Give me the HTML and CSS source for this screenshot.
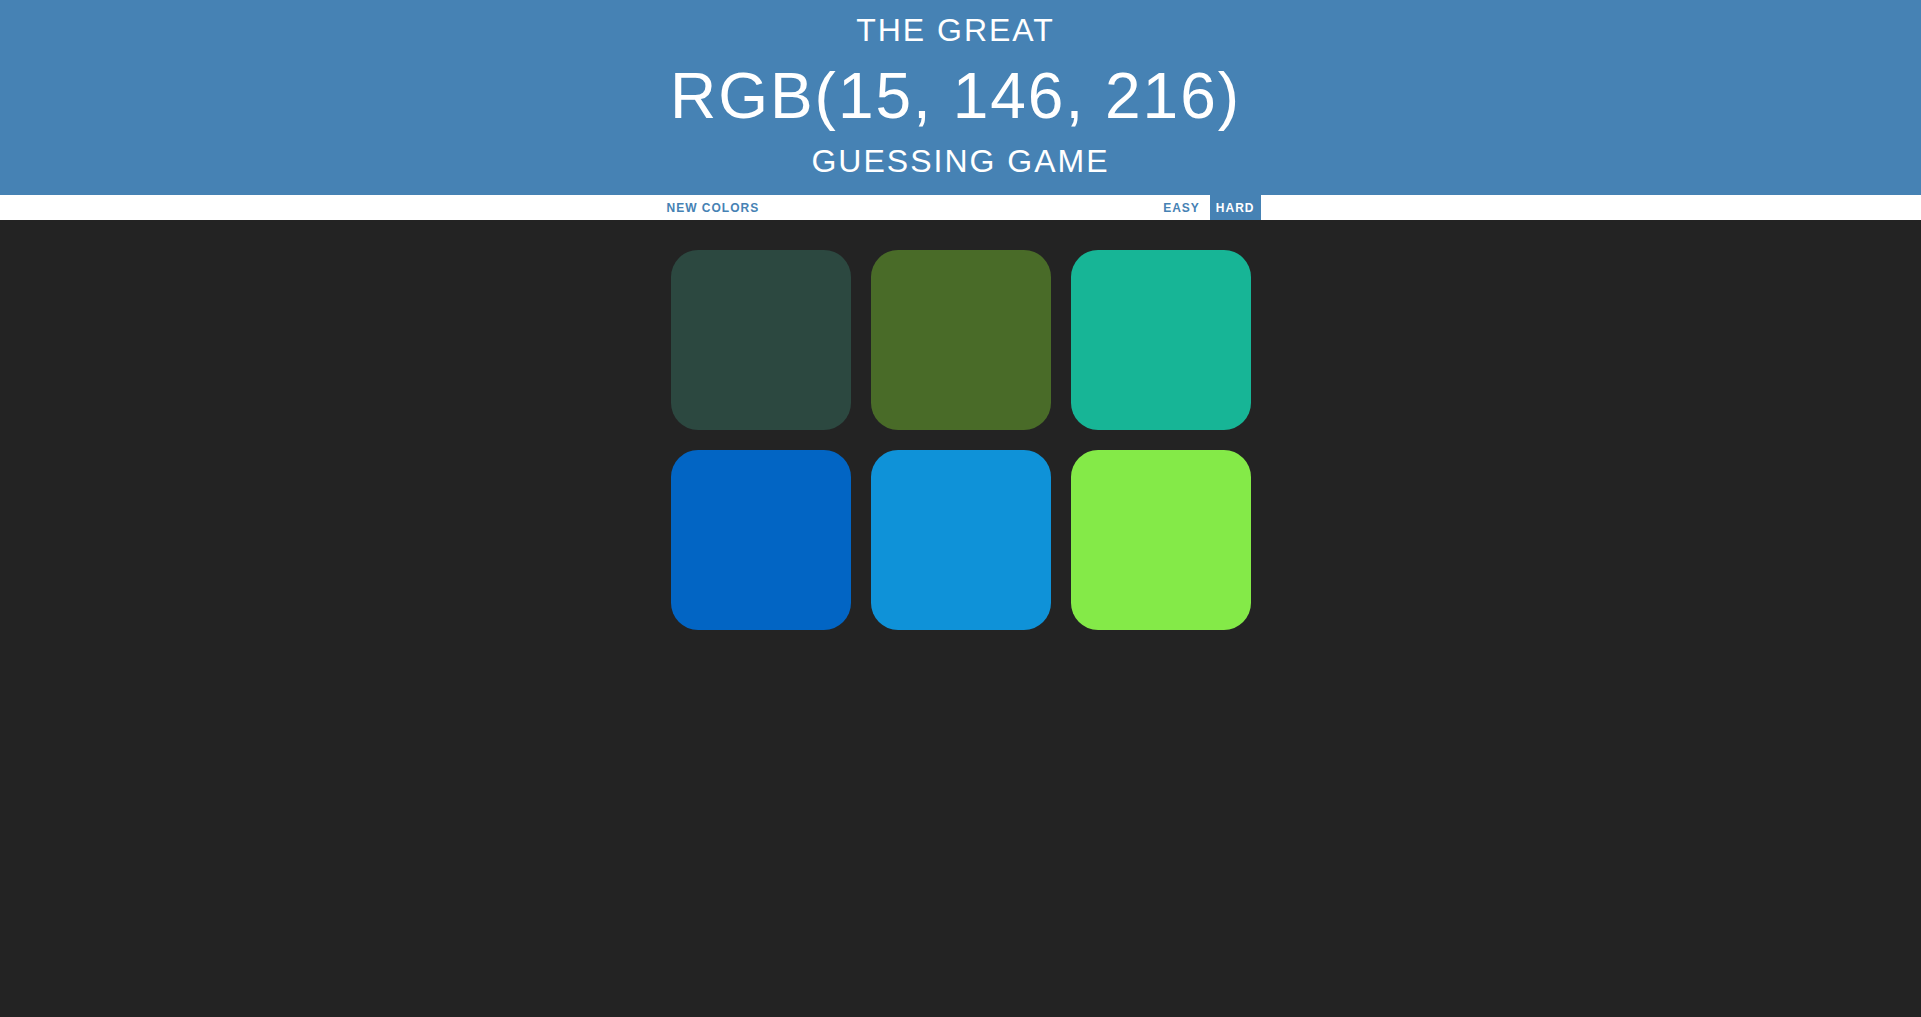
FILE: index.html
```html
<!DOCTYPE html>
<html lang="en">
<head>
<meta charset="utf-8">
<title>Color Game</title>
<link rel="stylesheet" href="styles.css">
</head>
<body>
<h1 class="title">
  <span class="title-line title-small title-shift">The Great</span>
  <span class="title-line title-big title-shift" id="colorDisplay">RGB(15, 146, 216)</span>
  <span class="title-line title-small title-last">Guessing Game</span>
</h1>
<div class="stripe">
  <div class="stripe-inner">
    <button class="btn" id="reset">New Colors</button>
    <span class="message"></span>
    <div class="modes">
      <button class="btn mode">Easy</button>
      <button class="btn mode selected">Hard</button>
    </div>
  </div>
</div>
<div class="container">
  <div class="square sq1"></div>
  <div class="square sq2"></div>
  <div class="square sq3"></div>
  <div class="square sq4"></div>
  <div class="square sq5"></div>
  <div class="square sq6"></div>
</div>
</body>
</html>
```
FILE: styles.css
```css
html, body {
  margin: 0;
  padding: 0;
}
body {
  background: #232323;
  font-family: "Liberation Sans", Arial, sans-serif;
}
.title {
  margin: 0;
  padding: 12px 0 16px;
  background: #4682b4;
  color: #ffffff;
  font-weight: normal;
  text-align: center;
  text-transform: uppercase;
  letter-spacing: 2px;
}
.title-line {
  display: block;
}
.title-shift {
  padding-right: 10px;
}
.title-small {
  font-size: 32px;
  line-height: 36px;
}
.title-big {
  font-size: 64px;
  line-height: 72px;
  margin-top: 12px;
}
.title-last {
  margin-top: 11px;
}
.stripe {
  background: #ffffff;
  height: 25px;
}
.stripe-inner {
  width: 600px;
  height: 100%;
  margin: 0 auto;
  display: flex;
  justify-content: space-between;
  align-items: stretch;
}
.modes {
  display: flex;
  gap: 4px;
  height: 100%;
}
.btn {
  border: none;
  background: none;
  margin: 0;
  padding: 0 6px;
  height: 100%;
  font-family: "Liberation Sans", Arial, sans-serif;
  font-size: 12px;
  font-weight: 700;
  letter-spacing: 1px;
  text-transform: uppercase;
  color: #4682b4;
  outline: none;
  cursor: pointer;
}
.btn.selected {
  background: #4682b4;
  color: #ffffff;
}
.container {
  width: 600px;
  margin: 20px auto;
  padding: 10px;
  box-sizing: border-box;
  display: grid;
  grid-template-columns: repeat(3, 180px);
  gap: 20px;
}
.square {
  width: 180px;
  height: 180px;
  border-radius: 15%;
}
.sq1 { background: rgb(44, 72, 64); }
.sq2 { background: rgb(73, 107, 40); }
.sq3 { background: rgb(23, 181, 150); }
.sq4 { background: rgb(2, 101, 196); }
.sq5 { background: rgb(15, 146, 216); }
.sq6 { background: rgb(132, 234, 72); }
```
